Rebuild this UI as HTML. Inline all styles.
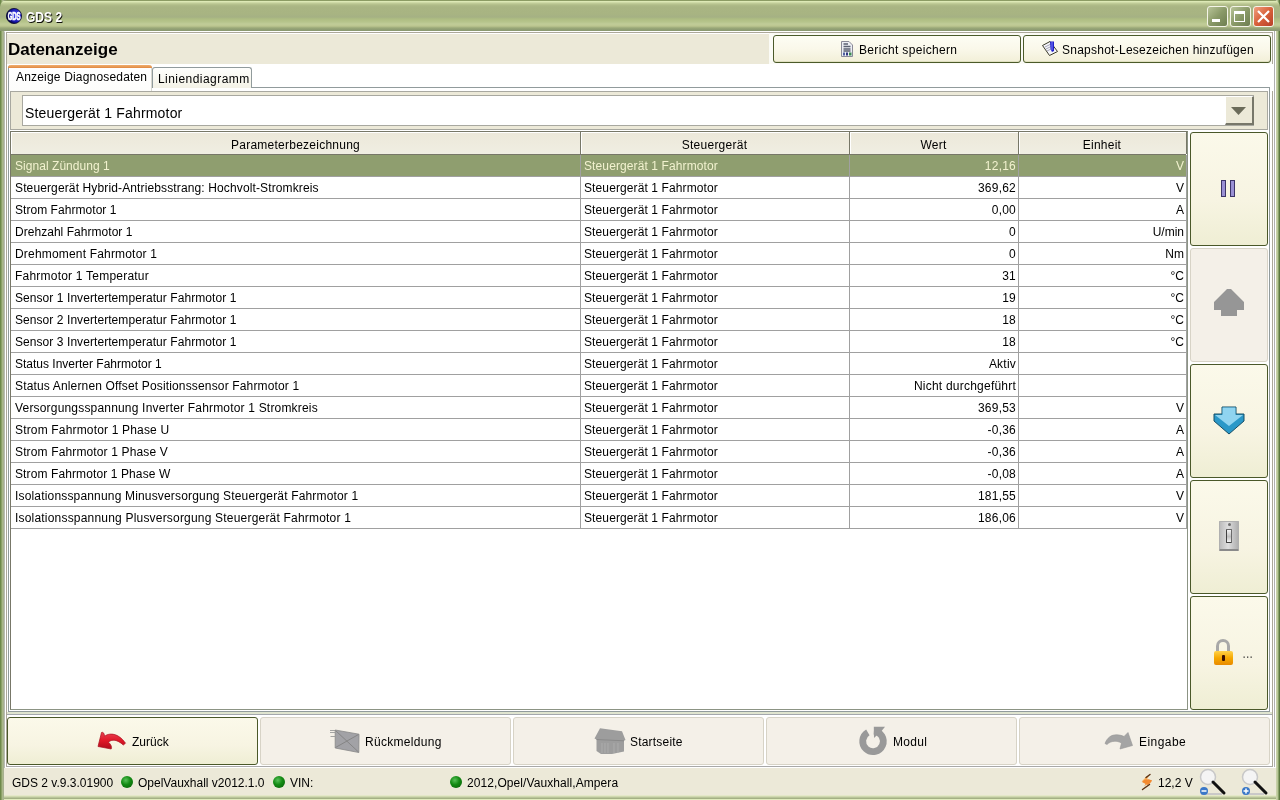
<!DOCTYPE html>
<html><head><meta charset="utf-8">
<style>
*{margin:0;padding:0;box-sizing:border-box}
html,body{width:1280px;height:800px;overflow:hidden;background:#ece9d8;font-family:"Liberation Sans",sans-serif;font-size:12px;color:#000}
.a{position:absolute}
#frame{left:0;top:0;width:1280px;height:800px;background:linear-gradient(90deg,#6e8a4a 0,#6e8a4a 1px,#8ca068 1px,#8ca068 2px,#a8b888 2px,#a8b888 3px,#a8b090 3px,#a8b090 4px,#a0a090 4px,#a0a090 1276px,#c8d0a8 1276px,#c8d0a8 1277px,#b8c898 1277px,#b8c898 1278px,#8aa068 1278px,#8aa068 1279px,#5c7840 1279px)}
#title{left:0;top:0;width:1280px;height:31px;background:linear-gradient(180deg,#8c9c64 0,#8c9c64 1px,#e2eebc 1px,#d8e4b0 2px,#c4d09c 3px,#b0bc88 5px,#a9b583 7px,#a8b482 14px,#a5b184 17px,#aebd82 19px,#b6c48c 22px,#c0cc98 24px,#bcc690 26px,#9aa878 28px,#8c9a72 30px,#8a9870 31px);border-radius:7px 7px 0 0}
#client{left:4px;top:31px;width:1272px;height:764px;background:#fff;border-top:1px solid #fff;border-left:1px solid #b8bcb0;border-right:1px solid #fff}
#inner{left:6px;top:32px;width:1267px;height:735px;border:1px solid #aca899;border-bottom:1px solid #a8a8a8;background:#fff}
#rline{left:1274px;top:31px;width:1px;height:736px;background:#b0b0b0}
#lwhite{left:5px;top:31px;width:1px;height:737px;background:#fff}
#bottomframe{left:4px;top:795px;width:1272px;height:5px;background:linear-gradient(180deg,#e4e8c8 0,#e4e8c8 1px,#d0d8b0 1px,#d0d8b0 2px,#b8c498 2px,#b8c498 3px,#a4b084 3px,#a4b084 4px,#e0ecbc 4px)}
.tb{font-weight:bold;color:#fff;font-size:14px;text-shadow:1px 1px 0 #10100a;transform:scaleX(0.86);transform-origin:0 0}
.winbtn{top:6px;width:21px;height:21px;border:1px solid #f4f4e8;border-radius:3px}
.hbtn{height:28px;border:1px solid #4b5a2a;border-radius:3px;background:linear-gradient(180deg,#fdfdf4 0,#faf8ea 50%,#f2efd8 100%);box-shadow:inset 0 -1px 0 #e0e0c0}
.tab{height:22px}
.cell{position:absolute;white-space:nowrap;height:21px;line-height:21px;top:1px}
.gl{position:absolute;background:#a0a0a0}
.rbtn{left:1190px;width:78px;height:114px;border-radius:3px}
.on{border:1px solid #4a5829;background:linear-gradient(180deg,#fbf9ea 0,#f7f4e2 60%,#efeed4 100%)}
.off{border:1px solid #d7d3c6;background:#f4f0e8}
.bbtn{top:717px;height:48px;width:251px;border-radius:3px}
.btxt{position:absolute;top:735px;line-height:14px;white-space:nowrap}
.dot{width:12px;height:12px;border-radius:50%;background:radial-gradient(circle at 40% 35%,#58c058 0,#148c14 42%,#055a05 100%);top:776px}
</style></head><body><div style="position:absolute;left:0;top:0;width:1280px;height:800px;will-change:transform">
<div class="a" id="frame"></div>
<div class="a" id="title"></div>
<div class="a" id="client"></div>
<div class="a" id="bottomframe"></div>
<div class="a" id="inner"></div>
<div class="a" id="rline"></div>
<div class="a" id="lwhite"></div>

<!-- title -->
<svg class="a" style="left:5px;top:7px" width="18" height="18"><defs><radialGradient id="gc" cx="0.65" cy="0.45" r="0.6"><stop offset="0" stop-color="#5050ff"/><stop offset="0.7" stop-color="#1818b0"/><stop offset="1" stop-color="#000040"/></radialGradient></defs><circle cx="9" cy="9" r="7.6" fill="url(#gc)" stroke="#0a0a30" stroke-width="0.8"/><text x="9" y="12.6" text-anchor="middle" font-family="Liberation Sans" font-weight="bold" font-size="10" fill="#fff" stroke="#fff" stroke-width="0.6" transform="translate(9 0) scale(0.6 1) translate(-9 0)" letter-spacing="-0.2">GDS</text></svg>
<div class="a tb" style="left:26px;top:9px;line-height:17px">GDS 2</div>
<div class="a winbtn" style="left:1207px;background:linear-gradient(135deg,#b8c498,#8a9a68 50%,#6e7e50)"><div class="a" style="left:4px;top:12px;width:8px;height:3px;background:#fff"></div></div>
<div class="a winbtn" style="left:1230px;background:linear-gradient(135deg,#b8c498,#8a9a68 50%,#6e7e50)"><div class="a" style="left:3px;top:4px;width:11px;height:11px;border:1px solid #fff;border-top-width:3px"></div></div>
<div class="a winbtn" style="left:1253px;background:linear-gradient(135deg,#f0a080,#d8603a 50%,#b8402a)"><svg class="a" style="left:2px;top:2px" width="16" height="16"><path d="M2 2L13 13M13 2L2 13" stroke="#fff" stroke-width="2.2"/></svg></div>

<!-- header -->
<div class="a" style="left:7px;top:34px;width:762px;height:30px;background:#ece9d8"></div>
<div class="a" style="left:7px;top:64px;width:1267px;height:27px;background:#fff"></div>
<div class="a" style="left:769px;top:33px;width:503px;height:31px;background:#fbfbf6"></div>
<div class="a" style="left:8px;top:40px;font-size:17px;font-weight:bold;line-height:20px">Datenanzeige</div>
<div class="a hbtn" style="left:773px;top:35px;width:248px"></div>
<div class="a hbtn" style="left:1023px;top:35px;width:248px"></div>
<svg class="a" style="left:840px;top:40px" width="14" height="18"><path d="M1.5 1.5H9L12.5 5V16.5H1.5Z" fill="#eceef4" stroke="#8a8a98" stroke-width="1"/><path d="M3.5 4H8M3.5 6.5H10.5M3.5 9H10.5M3.5 11H10.5" stroke="#5a6070" stroke-width="1.3"/><rect x="3" y="12.5" width="2" height="3" fill="#5060a0"/><rect x="6" y="12.5" width="2" height="3" fill="#303880"/><rect x="9" y="12.5" width="2.5" height="3" fill="#3a8a50"/></svg>
<div class="a" style="left:859px;top:43px;line-height:14px;letter-spacing:0.33px">Bericht speichern</div>
<svg class="a" style="left:1040px;top:39px" width="20" height="18"><path d="M2.5 6.5L10 2.5L17.5 12.5L9.5 16.5Z" fill="#f4f4f8" stroke="#3a3a2a" stroke-width="1"/><path d="M5 8L11 5M6 10L12 7M7 12L13 9" stroke="#9090a8" stroke-width="0.8"/><path d="M10 2.5H14V12L12 13L10.5 10Z" fill="#2020c8"/><path d="M12 3V11" stroke="#8080ff" stroke-width="1"/></svg>
<div class="a" style="left:1062px;top:43px;line-height:14px;letter-spacing:0.25px">Snapshot-Lesezeichen hinzufügen</div>

<!-- tabs -->
<div class="a" style="left:8px;top:88px;width:1262px;height:624px;border-left:1px solid #919b9c;border-right:1px solid #919b9c;border-bottom:1px solid #919b9c;background:#fff"></div>
<div class="a" style="left:152px;top:87px;width:1118px;height:1px;background:#919b9c"></div>
<div class="a" style="left:8px;top:65px;width:144px;height:26px;background:linear-gradient(180deg,#fff 0,#fdfdfb 100%);border-left:1px solid #919b9c;border-right:1px solid #d8d8d0;border-radius:3px 3px 0 0"></div>
<div class="a" style="left:8px;top:65px;width:144px;height:3px;background:linear-gradient(180deg,#f0b070,#e08840);border-radius:3px 3px 0 0"></div>
<div class="a" style="left:16px;top:70px;line-height:14px;letter-spacing:0.18px">Anzeige Diagnosedaten</div>
<div class="a" style="left:152px;top:67px;width:100px;height:21px;background:linear-gradient(180deg,#fefefc,#f4f2e6);border:1px solid #919b9c;border-bottom:none;border-radius:3px 3px 0 0"></div>
<div class="a" style="left:158px;top:72px;line-height:14px;letter-spacing:0.45px">Liniendiagramm</div>

<!-- tab panel -->
<div class="a" style="left:10px;top:91px;width:1258px;height:39px;border:1px solid #a8a8a0;background:#ece9d8"></div>
<div class="a" style="left:22px;top:95px;width:1232px;height:31px;border:1px solid #a8a8a0;background:#fff"></div>
<div class="a" style="left:25px;top:105px;font-size:14px;line-height:16px;letter-spacing:0.18px">Steuergerät 1 Fahrmotor</div>
<div class="a" style="left:1225px;top:96px;width:29px;height:29px;background:#ece9d8;border-right:2px solid #77776a;border-bottom:2px solid #77776a;border-top:1px solid #fff;border-left:1px solid #fff"></div>
<svg class="a" style="left:1230px;top:106px" width="18" height="10"><path d="M1 1H16L8.5 9Z" fill="#6b6b5a"/></svg>

<!-- table -->
<div class="a" style="left:10px;top:131px;width:1178px;height:579px;border:1px solid #777768;border-right-color:#8c9484;border-bottom-color:#8c9484;background:#fff" id="tbl"></div>
<div class="a" style="left:11px;top:132px;width:1175px;height:22px;background:linear-gradient(180deg,#ece8da,#f0eee2)"></div>
<div class="a" style="left:11px;top:132px;width:1px;height:22px;background:#fff"></div>
<div class="a" style="left:11px;top:132px;width:569px;height:1px;background:#fff"></div>
<div class="a" style="left:580px;top:132px;width:1px;height:22px;background:#777768"></div>
<div class="a" style="left:11px;top:137px;letter-spacing:0.25px;width:569px;text-align:center;line-height:16px">Parameterbezeichnung</div>
<div class="a" style="left:581px;top:132px;width:1px;height:22px;background:#fff"></div>
<div class="a" style="left:581px;top:132px;width:268px;height:1px;background:#fff"></div>
<div class="a" style="left:849px;top:132px;width:1px;height:22px;background:#777768"></div>
<div class="a" style="left:580px;top:137px;letter-spacing:0.25px;width:269px;text-align:center;line-height:16px">Steuergerät</div>
<div class="a" style="left:850px;top:132px;width:1px;height:22px;background:#fff"></div>
<div class="a" style="left:850px;top:132px;width:168px;height:1px;background:#fff"></div>
<div class="a" style="left:1018px;top:132px;width:1px;height:22px;background:#777768"></div>
<div class="a" style="left:849px;top:137px;letter-spacing:0.25px;width:169px;text-align:center;line-height:16px">Wert</div>
<div class="a" style="left:1019px;top:132px;width:1px;height:22px;background:#fff"></div>
<div class="a" style="left:1019px;top:132px;width:167px;height:1px;background:#fff"></div>
<div class="a" style="left:1018px;top:137px;letter-spacing:0.25px;width:168px;text-align:center;line-height:16px">Einheit</div>
<div class="a" style="left:11px;top:154px;width:1175px;height:1px;background:#777768"></div>
<div class="a" style="left:1186px;top:132px;width:1px;height:22px;background:#777768"></div>
<div class="a" style="left:11px;top:155px;width:1176px;height:21px;background:#8f9e6f;color:#f2f2cf">
<div class="cell" style="left:4px;letter-spacing:0.047px">Signal Zündung 1</div>
<div class="cell" style="left:573px;letter-spacing:0.11px">Steuergerät 1 Fahrmotor</div>
<div class="cell" style="right:171px;letter-spacing:0.22px">12,16</div>
<div class="cell" style="right:3px;letter-spacing:0">V</div>
</div>
<div class="a" style="left:11px;top:176px;width:1176px;height:1px;background:#a0a0a0"></div>
<div class="a" style="left:11px;top:177px;width:1176px;height:21px;background:#fff;color:#000">
<div class="cell" style="left:4px;letter-spacing:0.128px">Steuergerät Hybrid-Antriebsstrang: Hochvolt-Stromkreis</div>
<div class="cell" style="left:573px;letter-spacing:0.11px">Steuergerät 1 Fahrmotor</div>
<div class="cell" style="right:171px;letter-spacing:0.22px">369,62</div>
<div class="cell" style="right:3px;letter-spacing:0">V</div>
</div>
<div class="a" style="left:11px;top:198px;width:1176px;height:1px;background:#a0a0a0"></div>
<div class="a" style="left:11px;top:199px;width:1176px;height:21px;background:#fff;color:#000">
<div class="cell" style="left:4px;letter-spacing:0.047px">Strom Fahrmotor 1</div>
<div class="cell" style="left:573px;letter-spacing:0.11px">Steuergerät 1 Fahrmotor</div>
<div class="cell" style="right:171px;letter-spacing:0.22px">0,00</div>
<div class="cell" style="right:3px;letter-spacing:0">A</div>
</div>
<div class="a" style="left:11px;top:220px;width:1176px;height:1px;background:#a0a0a0"></div>
<div class="a" style="left:11px;top:221px;width:1176px;height:21px;background:#fff;color:#000">
<div class="cell" style="left:4px;letter-spacing:0.037px">Drehzahl Fahrmotor 1</div>
<div class="cell" style="left:573px;letter-spacing:0.11px">Steuergerät 1 Fahrmotor</div>
<div class="cell" style="right:171px;letter-spacing:0.22px">0</div>
<div class="cell" style="right:3px;letter-spacing:0">U/min</div>
</div>
<div class="a" style="left:11px;top:242px;width:1176px;height:1px;background:#a0a0a0"></div>
<div class="a" style="left:11px;top:243px;width:1176px;height:21px;background:#fff;color:#000">
<div class="cell" style="left:4px;letter-spacing:0.181px">Drehmoment Fahrmotor 1</div>
<div class="cell" style="left:573px;letter-spacing:0.11px">Steuergerät 1 Fahrmotor</div>
<div class="cell" style="right:171px;letter-spacing:0.22px">0</div>
<div class="cell" style="right:3px;letter-spacing:0">Nm</div>
</div>
<div class="a" style="left:11px;top:264px;width:1176px;height:1px;background:#a0a0a0"></div>
<div class="a" style="left:11px;top:265px;width:1176px;height:21px;background:#fff;color:#000">
<div class="cell" style="left:4px;letter-spacing:0.219px">Fahrmotor 1 Temperatur</div>
<div class="cell" style="left:573px;letter-spacing:0.11px">Steuergerät 1 Fahrmotor</div>
<div class="cell" style="right:171px;letter-spacing:0.22px">31</div>
<div class="cell" style="right:3px;letter-spacing:0">°C</div>
</div>
<div class="a" style="left:11px;top:286px;width:1176px;height:1px;background:#a0a0a0"></div>
<div class="a" style="left:11px;top:287px;width:1176px;height:21px;background:#fff;color:#000">
<div class="cell" style="left:4px;letter-spacing:0.068px">Sensor 1 Invertertemperatur Fahrmotor 1</div>
<div class="cell" style="left:573px;letter-spacing:0.11px">Steuergerät 1 Fahrmotor</div>
<div class="cell" style="right:171px;letter-spacing:0.22px">19</div>
<div class="cell" style="right:3px;letter-spacing:0">°C</div>
</div>
<div class="a" style="left:11px;top:308px;width:1176px;height:1px;background:#a0a0a0"></div>
<div class="a" style="left:11px;top:309px;width:1176px;height:21px;background:#fff;color:#000">
<div class="cell" style="left:4px;letter-spacing:0.068px">Sensor 2 Invertertemperatur Fahrmotor 1</div>
<div class="cell" style="left:573px;letter-spacing:0.11px">Steuergerät 1 Fahrmotor</div>
<div class="cell" style="right:171px;letter-spacing:0.22px">18</div>
<div class="cell" style="right:3px;letter-spacing:0">°C</div>
</div>
<div class="a" style="left:11px;top:330px;width:1176px;height:1px;background:#a0a0a0"></div>
<div class="a" style="left:11px;top:331px;width:1176px;height:21px;background:#fff;color:#000">
<div class="cell" style="left:4px;letter-spacing:0.068px">Sensor 3 Invertertemperatur Fahrmotor 1</div>
<div class="cell" style="left:573px;letter-spacing:0.11px">Steuergerät 1 Fahrmotor</div>
<div class="cell" style="right:171px;letter-spacing:0.22px">18</div>
<div class="cell" style="right:3px;letter-spacing:0">°C</div>
</div>
<div class="a" style="left:11px;top:352px;width:1176px;height:1px;background:#a0a0a0"></div>
<div class="a" style="left:11px;top:353px;width:1176px;height:21px;background:#fff;color:#000">
<div class="cell" style="left:4px;letter-spacing:0px">Status Inverter Fahrmotor 1</div>
<div class="cell" style="left:573px;letter-spacing:0.11px">Steuergerät 1 Fahrmotor</div>
<div class="cell" style="right:171px;letter-spacing:0.22px">Aktiv</div>
<div class="cell" style="right:3px;letter-spacing:0"></div>
</div>
<div class="a" style="left:11px;top:374px;width:1176px;height:1px;background:#a0a0a0"></div>
<div class="a" style="left:11px;top:375px;width:1176px;height:21px;background:#fff;color:#000">
<div class="cell" style="left:4px;letter-spacing:0.155px">Status Anlernen Offset Positionssensor Fahrmotor 1</div>
<div class="cell" style="left:573px;letter-spacing:0.11px">Steuergerät 1 Fahrmotor</div>
<div class="cell" style="right:171px;letter-spacing:0.22px">Nicht durchgeführt</div>
<div class="cell" style="right:3px;letter-spacing:0"></div>
</div>
<div class="a" style="left:11px;top:396px;width:1176px;height:1px;background:#a0a0a0"></div>
<div class="a" style="left:11px;top:397px;width:1176px;height:21px;background:#fff;color:#000">
<div class="cell" style="left:4px;letter-spacing:0.184px">Versorgungsspannung Inverter Fahrmotor 1 Stromkreis</div>
<div class="cell" style="left:573px;letter-spacing:0.11px">Steuergerät 1 Fahrmotor</div>
<div class="cell" style="right:171px;letter-spacing:0.22px">369,53</div>
<div class="cell" style="right:3px;letter-spacing:0">V</div>
</div>
<div class="a" style="left:11px;top:418px;width:1176px;height:1px;background:#a0a0a0"></div>
<div class="a" style="left:11px;top:419px;width:1176px;height:21px;background:#fff;color:#000">
<div class="cell" style="left:4px;letter-spacing:0.167px">Strom Fahrmotor 1 Phase U</div>
<div class="cell" style="left:573px;letter-spacing:0.11px">Steuergerät 1 Fahrmotor</div>
<div class="cell" style="right:171px;letter-spacing:0.22px">-0,36</div>
<div class="cell" style="right:3px;letter-spacing:0">A</div>
</div>
<div class="a" style="left:11px;top:440px;width:1176px;height:1px;background:#a0a0a0"></div>
<div class="a" style="left:11px;top:441px;width:1176px;height:21px;background:#fff;color:#000">
<div class="cell" style="left:4px;letter-spacing:0.138px">Strom Fahrmotor 1 Phase V</div>
<div class="cell" style="left:573px;letter-spacing:0.11px">Steuergerät 1 Fahrmotor</div>
<div class="cell" style="right:171px;letter-spacing:0.22px">-0,36</div>
<div class="cell" style="right:3px;letter-spacing:0">A</div>
</div>
<div class="a" style="left:11px;top:462px;width:1176px;height:1px;background:#a0a0a0"></div>
<div class="a" style="left:11px;top:463px;width:1176px;height:21px;background:#fff;color:#000">
<div class="cell" style="left:4px;letter-spacing:0.108px">Strom Fahrmotor 1 Phase W</div>
<div class="cell" style="left:573px;letter-spacing:0.11px">Steuergerät 1 Fahrmotor</div>
<div class="cell" style="right:171px;letter-spacing:0.22px">-0,08</div>
<div class="cell" style="right:3px;letter-spacing:0">A</div>
</div>
<div class="a" style="left:11px;top:484px;width:1176px;height:1px;background:#a0a0a0"></div>
<div class="a" style="left:11px;top:485px;width:1176px;height:21px;background:#fff;color:#000">
<div class="cell" style="left:4px;letter-spacing:0.17px">Isolationsspannung Minusversorgung Steuergerät Fahrmotor 1</div>
<div class="cell" style="left:573px;letter-spacing:0.11px">Steuergerät 1 Fahrmotor</div>
<div class="cell" style="right:171px;letter-spacing:0.22px">181,55</div>
<div class="cell" style="right:3px;letter-spacing:0">V</div>
</div>
<div class="a" style="left:11px;top:506px;width:1176px;height:1px;background:#a0a0a0"></div>
<div class="a" style="left:11px;top:507px;width:1176px;height:21px;background:#fff;color:#000">
<div class="cell" style="left:4px;letter-spacing:0.196px">Isolationsspannung Plusversorgung Steuergerät Fahrmotor 1</div>
<div class="cell" style="left:573px;letter-spacing:0.11px">Steuergerät 1 Fahrmotor</div>
<div class="cell" style="right:171px;letter-spacing:0.22px">186,06</div>
<div class="cell" style="right:3px;letter-spacing:0">V</div>
</div>
<div class="a" style="left:11px;top:528px;width:1176px;height:1px;background:#a0a0a0"></div>
<div class="a" style="left:580px;top:155px;width:1px;height:374px;background:#a0a0a0"></div>
<div class="a" style="left:849px;top:155px;width:1px;height:374px;background:#a0a0a0"></div>
<div class="a" style="left:1018px;top:155px;width:1px;height:374px;background:#a0a0a0"></div>
<div class="a" style="left:1186px;top:155px;width:1px;height:374px;background:#a0a0a0"></div>

<!-- right buttons -->
<div class="a" style="left:1188px;top:131px;width:81px;height:580px;background:#fff"></div>
<div class="a rbtn on" style="top:132px"></div>
<div class="a rbtn off" style="top:248px"></div>
<div class="a rbtn on" style="top:364px"></div>
<div class="a rbtn on" style="top:480px"></div>
<div class="a rbtn on" style="top:596px"></div>
<!-- pause -->
<div class="a" style="left:1221px;top:180px;width:5px;height:17px;background:#9a90d4;border:1px solid #3c3468"></div>
<div class="a" style="left:1230px;top:180px;width:5px;height:17px;background:#9a90d4;border:1px solid #3c3468"></div>
<!-- up arrow gray -->
<svg class="a" style="left:1208px;top:284px" width="40" height="40"><path d="M19 5H23L36 18V26H29V32H13V26H6V18Z" fill="#969696"/></svg>
<!-- down arrow blue -->
<svg class="a" style="left:1208px;top:400px" width="40" height="40">
<path d="M14 7H28V14H36V21L21 34L6 21V14H14Z" fill="#2a98c8" stroke="#174e66" stroke-width="1"/>
<path d="M14.5 7.5H27.5V15H35L21 26L7 15H14.5Z" fill="#90d4f0"/>
</svg>
<!-- switch -->
<div class="a" style="left:1219px;top:521px;width:20px;height:30px;border-radius:1px;background:linear-gradient(90deg,#bcbcbc,#dedede 45%,#c8c8c8 70%,#b0b0b0);border:1px solid #b0b0b0;border-bottom:2px solid #8a8a8a"></div>
<div class="a" style="left:1228px;top:523px;width:3px;height:3px;border-radius:50%;background:#707070"></div>
<div class="a" style="left:1226px;top:529px;width:6px;height:14px;border-radius:1px;background:linear-gradient(180deg,#f4f4f4,#c0c0c0 55%,#f4f4f4);border:1px solid #6a6a6a;border-left-color:#404040;border-bottom-color:#404040"></div>
<!-- lock -->
<div class="a" style="left:1216px;top:639px;width:14px;height:16px;border:3px solid #a8a8a8;border-bottom:none;border-radius:7px 7px 0 0"></div>
<div class="a" style="left:1214px;top:651px;width:19px;height:14px;border-radius:2px;background:linear-gradient(180deg,#ffd24a,#f6a800 50%,#e88a00)"></div>
<div class="a" style="left:1222px;top:655px;width:3px;height:6px;border-radius:1px;background:#3a1000"></div>
<svg class="a" style="left:1242px;top:654px" width="12" height="6"><rect x="1.5" y="2.5" width="1.3" height="1.3" fill="#333"/><rect x="5" y="2.5" width="1.3" height="1.3" fill="#333"/><rect x="8.5" y="2.5" width="1.3" height="1.3" fill="#333"/></svg>

<!-- bottom panel -->
<div class="a" style="left:7px;top:712px;width:1265px;height:2px;background:#dfe4cf"></div>
<div class="a" style="left:7px;top:714px;width:1265px;height:1px;background:#a4a8ac"></div>
<div class="a bbtn on" style="left:7px"></div>
<div class="a bbtn off" style="left:260px"></div>
<div class="a bbtn off" style="left:513px"></div>
<div class="a bbtn off" style="left:766px"></div>
<div class="a bbtn off" style="left:1019px"></div>
<div class="btxt" style="left:132px">Zurück</div>
<div class="btxt" style="left:365px;letter-spacing:0.3px">Rückmeldung</div>
<div class="btxt" style="left:630px;letter-spacing:0.2px">Startseite</div>
<div class="btxt" style="left:893px;letter-spacing:0.3px">Modul</div>
<div class="btxt" style="left:1139px;letter-spacing:0.45px">Eingabe</div>
<!-- icons -->
<svg class="a" style="left:94px;top:728px" width="36" height="26"><defs><linearGradient id="rg" x1="0" y1="0" x2="0" y2="1"><stop offset="0" stop-color="#e84050"/><stop offset="0.5" stop-color="#e01828"/><stop offset="1" stop-color="#b00c1c"/></linearGradient></defs><path d="M7.5 4.5C9 3.8 10.2 5 10.6 8.2C15 4.8 24 4.5 31.5 15.2L29.3 17C23.5 11.5 17.5 11 14.5 14.2C17 16.5 18.2 19.2 17.2 21L4 18.5Z" fill="url(#rg)" stroke="#a81020" stroke-width="0.7"/></svg>
<svg class="a" style="left:326px;top:724px" width="36" height="32"><path d="M9.2 6L33 10.2L32.8 28.5L9.2 24Z" fill="#a2a2a6" stroke="#888" stroke-width="0.8"/><path d="M9.5 6.5L32.5 28M9.5 23.5L32.5 10.5" stroke="#858585" stroke-width="1" fill="none"/><path d="M4 6.5H9M4 8.5H9M4.5 12.5H9" stroke="#9a9a9a" stroke-width="0.9"/></svg>
<svg class="a" style="left:590px;top:724px" width="40" height="34"><path d="M10 4.2L32 7.2L35.5 16L34 16.8V27.5L22 30L11 30L6.5 27V15.5L4.5 14.5Z" fill="#9d9d9d"/><path d="M6.5 15.5L34 16.8" stroke="#8a8a8a" stroke-width="1"/><path d="M12 19V29M15 19V29M18 19V29M24 19V29M28 19V29" stroke="#b0b0b0" stroke-width="0.8"/></svg>
<svg class="a" style="left:855px;top:724px" width="36" height="34"><path d="M12.85 8.38A10.3 10.3 0 1 0 18.9 7.04" stroke="#999" stroke-width="6.8" fill="none"/><path d="M18.8 2.8H30L27 6.5L19 14Z" fill="#999"/></svg>
<svg class="a" style="left:1100px;top:728px" width="36" height="26"><path d="M5 15.5C7 10 11 6.5 17 6.8C20 7 22 7.5 24 8.5L28 4.5L32.5 17.5L20 21L21.5 15C17 12.5 11 12.5 7 16.5Z" fill="#a4a4a4" stroke="#959595" stroke-width="0.6"/></svg>

<!-- status bar -->
<div class="a" style="left:4px;top:768px;width:1272px;height:27px;background:#ece9d8"></div>
<div class="a" style="left:12px;top:776px;line-height:14px">GDS 2 v.9.3.01900</div>
<div class="a dot" style="left:121px"></div>
<div class="a" style="left:138px;top:776px;line-height:14px">OpelVauxhall v2012.1.0</div>
<div class="a dot" style="left:273px"></div>
<div class="a" style="left:290px;top:776px;line-height:14px">VIN:</div>
<div class="a dot" style="left:450px"></div>
<div class="a" style="left:467px;top:776px;line-height:14px;letter-spacing:0.08px">2012,Opel/Vauxhall,Ampera</div>
<svg class="a" style="left:1136px;top:770px" width="20" height="24"><defs><linearGradient id="lg" x1="0" y1="0" x2="1" y2="1"><stop offset="0" stop-color="#ffd890"/><stop offset="0.5" stop-color="#f59a40"/><stop offset="1" stop-color="#e07020"/></linearGradient></defs><path d="M11 6L5.5 11.5L11 11.5L8 16.5L16 10L10.5 10L13 6Z" fill="url(#lg)"/><path d="M6 12C8 9.5 11 9 13.5 9.5L16 10.5C15 13 13.5 14 11.5 15Z" fill="#f28a30"/><path d="M14 4.5L10 7.5M13.5 14.5L6.5 19.5" stroke="#5a3010" stroke-width="1.4" stroke-linecap="round"/></svg>
<div class="a" style="left:1158px;top:776px;line-height:14px">12,2 V</div>
<svg class="a" style="left:1198px;top:767px" width="32" height="30"><circle cx="10" cy="10" r="7.5" fill="#f4f4f4" stroke="#c8c8c8" stroke-width="1.5"/><path d="M15 15L26 26" stroke="#111" stroke-width="3" stroke-linecap="round"/><path d="M3 27H24" stroke="#a8a8b8" stroke-width="1"/><circle cx="6" cy="24" r="4" fill="#3a78c8"/><path d="M3.5 24H8.5" stroke="#fff" stroke-width="1.5"/></svg>
<svg class="a" style="left:1240px;top:767px" width="32" height="30"><circle cx="10" cy="10" r="7.5" fill="#f4f4f4" stroke="#c8c8c8" stroke-width="1.5"/><path d="M15 15L26 26" stroke="#111" stroke-width="3" stroke-linecap="round"/><path d="M3 27H24" stroke="#a8a8b8" stroke-width="1"/><circle cx="6" cy="24" r="4" fill="#3a78c8"/><path d="M3.5 24H8.5M6 21.5V26.5" stroke="#fff" stroke-width="1.5"/></svg>
</div></body></html>
